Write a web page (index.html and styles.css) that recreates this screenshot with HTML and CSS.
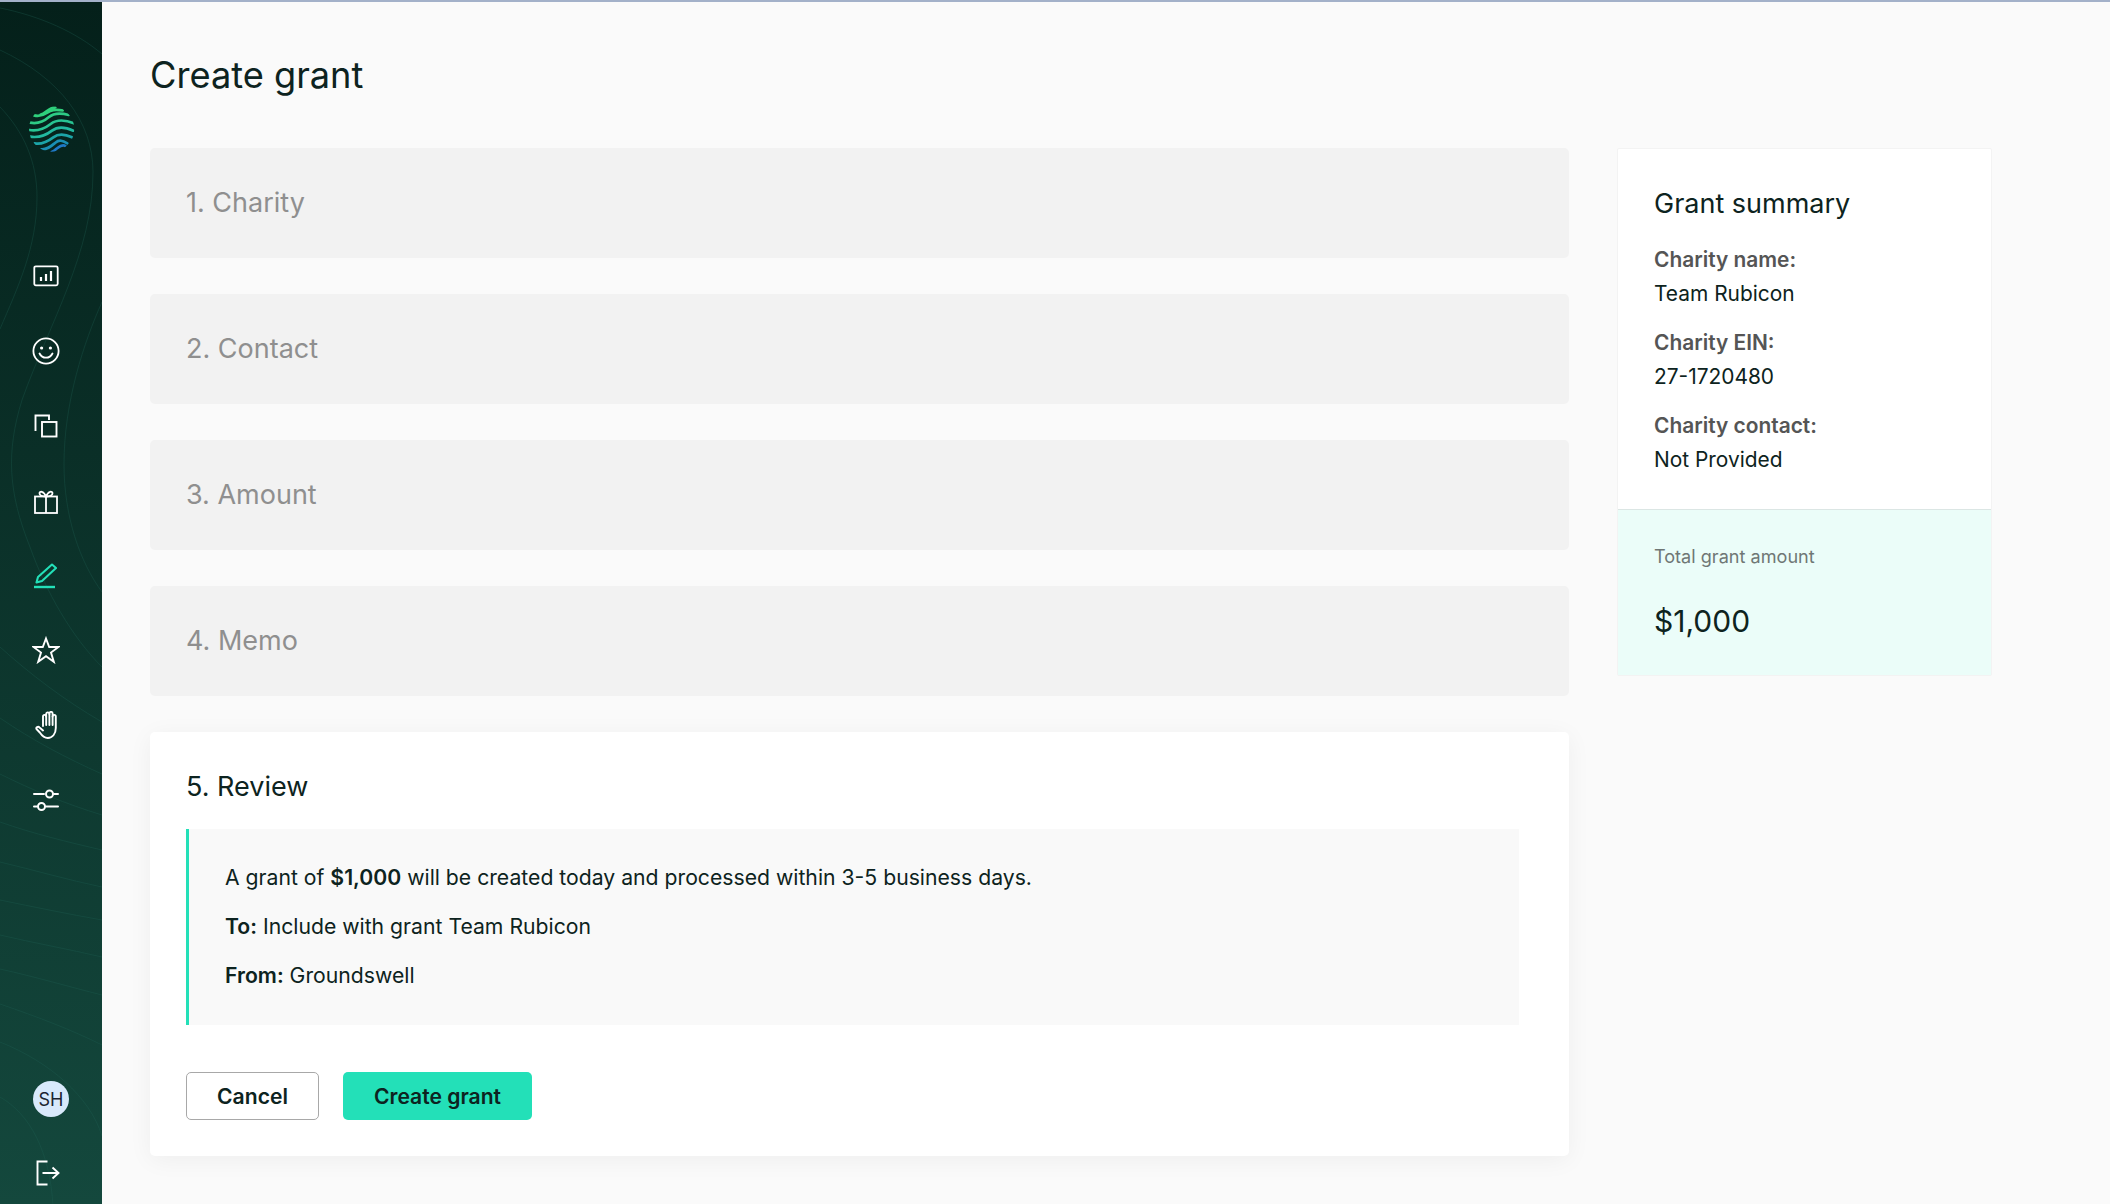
FILE: index.html
```html
<!DOCTYPE html>
<html lang="en">
<head>
<meta charset="utf-8">
<title>Create grant</title>
<link rel="stylesheet" href="styles.css">
</head>
<body>
<div class="app">
  <aside class="sidebar">
    <svg class="contours" viewBox="0 0 102 1202" fill="none" aria-hidden="true">
      <path d="M0 6C40 14 76 30 102 52"/>
      <path d="M0 48C60 76 93 120 93 170C93 250 50 320 22 398C6 450 8 490 30 545C46 590 72 635 102 665"/>
      <path d="M0 105C24 130 37 160 37 195C37 245 18 285 0 327"/>
      <path d="M102 300C84 340 64 400 64 462C64 515 80 560 102 590"/>
      <path d="M0 645C30 672 64 698 102 720"/>
      <path d="M0 716C32 738 66 756 102 772"/>
      <path d="M0 772C32 788 66 802 102 813"/>
      <path d="M0 820C34 832 68 840 102 848"/>
      <path d="M0 860C34 868 68 878 102 885"/>
      <path d="M0 898C34 905 68 912 102 918"/>
      <path d="M0 933C34 941 68 947 102 955"/>
      <path d="M0 967C36 975 70 985 102 993"/>
      <path d="M0 1002C38 1015 72 1028 102 1043"/>
      <path d="M0 1040C50 1060 90 1095 102 1134"/>
      <path d="M0 1095C30 1112 50 1150 53 1204"/>
    </svg>
    <div class="logo">
      <svg width="60" height="60" viewBox="0 0 180 180" fill="none" stroke-width="8" stroke-linecap="round">
        <defs><clipPath id="globe"><circle cx="95" cy="87" r="68"/></clipPath></defs>
        <g clip-path="url(#globe)">
          <path stroke="#2fcf7c" d="M62 44C76 42 84 24 106 22"/>
          <path stroke="#2fcf7c" d="M42 46C58 50 70 46 82 38S102 28 128 31"/>
          <path stroke="#2dcb85" d="M30 68C52 72 70 66 86 52S120 38 146 45"/>
          <path stroke="#28c493" d="M28 90C54 94 74 86 92 72S132 58 162 70"/>
          <path stroke="#22b9a0" d="M30 110C56 114 78 106 96 92S134 80 160 92"/>
          <path stroke="#1ca5a8" d="M44 130C66 134 84 124 100 112S134 102 156 112"/>
          <path stroke="#1a8fb3" d="M64 148C82 150 94 138 106 128S128 122 142 130"/>
          <path stroke="#1f79c6" d="M95 156C106 152 112 142 122 138S130 136 136 138"/>
        </g>
      </svg>
    </div>
    <nav class="nav">
      <a class="nav-item"><svg viewBox="0 0 26 22" width="26" height="22" fill="none" stroke="#fff" stroke-width="1.8"><rect x="1.300" y="1.300" width="23.400" height="19" rx="1.500"/><path stroke-width="2.200" d="M8 16v-4M13 16V9M18 16V6"/></svg></a>
      <a class="nav-item"><svg viewBox="0 0 28 28" width="28" height="28" fill="none" stroke="#fff" stroke-width="1.800"><circle cx="14" cy="14" r="12.600"/><circle cx="9.600" cy="11" r="1.600" fill="#fff" stroke="none"/><circle cx="18.400" cy="11" r="1.600" fill="#fff" stroke="none"/><path stroke-linecap="round" d="M7.500 16.500c1.500 3 4 4.200 6.500 4.200s5-1.200 6.500-4.200"/></svg></a>
      <a class="nav-item"><svg viewBox="0 0 24 24" width="24" height="24" fill="none" stroke="#fff" stroke-width="1.900"><path d="M1.500 17V1.500H15V6"/><rect x="8" y="8" width="14.500" height="14.500"/></svg></a>
      <a class="nav-item gift"><svg viewBox="0 0 24 24" width="24" height="24" fill="none" stroke="#fff" stroke-width="1.800"><rect x="1" y="6.500" width="22" height="16.500"/><path d="M12 6.500V23"/><path d="M12 6.500C8 6.500 5.500 5.500 5.500 3.300S9.500 .5 12 6.500C14.500 .5 18.500 1 18.500 3.300S16 6.500 12 6.500Z"/></svg></a>
      <a class="nav-item pen"><svg viewBox="0 0 24 26" width="24" height="26" fill="none" stroke="#23e0b8" stroke-width="2.100"><path stroke-linejoin="round" d="M5 14 19 1.500 23 5 9 18 3.500 19.500Z"/><path stroke-width="2.400" d="M1 24h21"/></svg></a>
      <a class="nav-item"><svg viewBox="0 0 28 28" width="28" height="28" fill="none" stroke="#fff" stroke-width="1.900" stroke-linejoin="miter"><path d="M14 2.500 17.200 11H26.500L19 16.500 21.800 25.800 14 20.200 6.200 25.800 9 16.500 1.500 11H10.800Z"/></svg></a>
      <a class="nav-item hand"><svg viewBox="0 0 26 28" width="26" height="28" fill="none" stroke="#fff" stroke-width="1.900" stroke-linecap="round" stroke-linejoin="round"><path d="M8 15V5.500a1.600 1.600 0 0 1 3.200 0V3a1.600 1.600 0 0 1 3.200 0V2.500a1.600 1.600 0 0 1 3.200 0v3a1.600 1.600 0 0 1 3.200 0V17c0 6-3.500 10-8 10-4 0-6-2.500-8-5.500L1.500 18c-.8-1.500 1.500-3 3-1.500L8 19.500"/><path d="M11.200 5.500V14M14.400 3V14M17.600 5.500V14"/></svg></a>
      <a class="nav-item"><svg viewBox="0 0 26 24" width="26" height="24" fill="none" stroke="#fff" stroke-width="2" stroke-linecap="round"><path d="M1 6h10M21 6h4M1 18.500h3M13 18.500h12"/><circle cx="16.500" cy="6" r="3.500"/><circle cx="8.500" cy="18.500" r="3.500"/></svg></a>
    </nav>
    <div class="sidebar-foot">
      <div class="avatar">SH</div>
      <a class="logout"><svg viewBox="0 0 24 26" width="24" height="26" fill="none" stroke="#fff" stroke-width="1.900"><path d="M11.500 1.500H1.500V24.500H11.500"/><path d="M6.500 13H22M16.500 7.500 22.500 13 16.500 18.500"/></svg></a>
    </div>
  </aside>
  <main class="main">
    <h1 class="title">Create grant</h1>
    <div class="columns">
      <div class="steps">
        <section class="step">1. Charity</section>
        <section class="step">2. Contact</section>
        <section class="step">3. Amount</section>
        <section class="step">4. Memo</section>
        <section class="review">
          <h2 class="review-title">5. Review</h2>
          <div class="notice">
            <p>A grant of <b>$1,000</b> will be created today and processed within 3-5 business days.</p>
            <p><b>To:</b> Include with grant Team Rubicon</p>
            <p><b>From:</b> Groundswell</p>
          </div>
          <div class="actions">
            <button class="btn btn-cancel">Cancel</button>
            <button class="btn btn-primary">Create grant</button>
          </div>
        </section>
      </div>
      <aside class="summary">
        <div class="summary-body">
          <h2 class="summary-title">Grant summary</h2>
          <dl class="facts">
            <dt>Charity name:</dt><dd>Team Rubicon</dd>
            <dt>Charity EIN:</dt><dd>27-1720480</dd>
            <dt>Charity contact:</dt><dd>Not Provided</dd>
          </dl>
        </div>
        <div class="total">
          <div class="total-label">Total grant amount</div>
          <div class="total-value">$1,000</div>
        </div>
      </aside>
    </div>
  </main>
</div>
</body>
</html>
```
FILE: styles.css
```css
* { box-sizing: border-box; }
html, body { margin: 0; height: 100%; }
body {
  font-family: Inter, "Liberation Sans", sans-serif;
  font-size: 21.2px;
  color: #0d2320;
  background: #fafafa;
  border-top: 2px solid #a3b1c9;
  overflow: hidden;
}
.app { display: flex; height: 1202px; }
.sidebar {
  position: relative;
  flex: 0 0 102px;
  display: flex;
  flex-direction: column;
  background: linear-gradient(180deg, #04201a 0%, #14483d 100%);
}
.contours { position: absolute; inset: 0; width: 102px; height: 1202px; }
.contours path { stroke: #1f5f55; stroke-opacity: .32; stroke-width: 1; }
.logo { position: relative; display: flex; padding: 98px 0 0 20px; height: 200px; }
.nav { position: relative; display: flex; flex-direction: column; margin-top: 37px; }
.nav-item { display: flex; align-items: center; justify-content: center; height: 74.8px; width: 92px; }
.gift { padding-top: 3px; }
.pen { padding-right: 2px; }
.hand { padding-left: 4px; }
.sidebar-foot { position: relative; margin-top: auto; display: flex; flex-direction: column; padding: 0 0 17px 33px; }
.avatar {
  width: 36px; height: 36px; border-radius: 50%;
  background: #d8e9fb; color: #1c2430;
  font-size: 18px; display: flex; align-items: center; justify-content: center;
}
.logout { display: flex; margin: 44px 0 0 3px; position: relative; top: -1px; }
.main { flex: 1; padding: 48px 48px 0; min-width: 0; }
.title { margin: 0; font-size: 36.2px; font-weight: 400; line-height: 50px; color: #0d2320; }
.columns { display: flex; gap: 48px; margin-top: 48px; align-items: flex-start; }
.steps { flex: 0 0 1419px; display: flex; flex-direction: column; gap: 36px; }
.step {
  height: 110px; padding: 0 36px 2px; display: flex; align-items: center;
  background: #f2f2f2; border-radius: 5px;
  font-size: 27px; color: #8f8f8f;
}
.review {
  background: #fff; border-radius: 5px; padding: 37px 50px 36px 36px;
  box-shadow: 0 4px 24px rgba(0,0,0,.05);
}
.review-title { margin: 0; font-size: 27px; font-weight: 400; line-height: 36px; color: #0d2320; }
.notice {
  margin-top: 24px; padding: 34px 36px 0; height: 196px;
  background: #f9f9f9; border-left: 3px solid #23e0b8;
  display: flex; flex-direction: column; gap: 21px;
}
.notice p { margin: 0; line-height: 28px; }
.notice b { font-weight: 600; }
.actions { display: flex; gap: 24px; margin-top: 47px; }
.btn {
  height: 48px; border-radius: 5px; font: 600 21.1px Inter, "Liberation Sans", sans-serif; color: #0d2320; padding: 0;
}
.btn-cancel { width: 133px; background: #fff; border: 1px solid #a8a8a8; }
.btn-primary { width: 189px; background: #23e0b8; border: 0; }
.summary {
  flex: 0 0 375px; background: #fff; border: 1px solid #f3f3f3; border-radius: 2px;
}
.summary-body { padding: 37px 36px 36px 36px; height: 360px; }
.summary-title { margin: 0; font-size: 27px; font-weight: 400; line-height: 36px; color: #0d2320; }
.facts { margin: 21px 0 0; }
.facts dt { font-weight: 600; color: #555; line-height: 34px; font-size: 20.9px; }
.facts dd { margin: 0 0 15px; line-height: 34px; font-size: 20.9px; }
.total { background: #ebfdf9; border-top: 1px solid #dbe6e4; height: 166px; padding: 32px 36px; }
.total-label { font-size: 18.1px; color: #6f7775; line-height: 28px; }
.total-value { margin-top: 31px; font-size: 30px; line-height: 40px; color: #0d2320; }
```
